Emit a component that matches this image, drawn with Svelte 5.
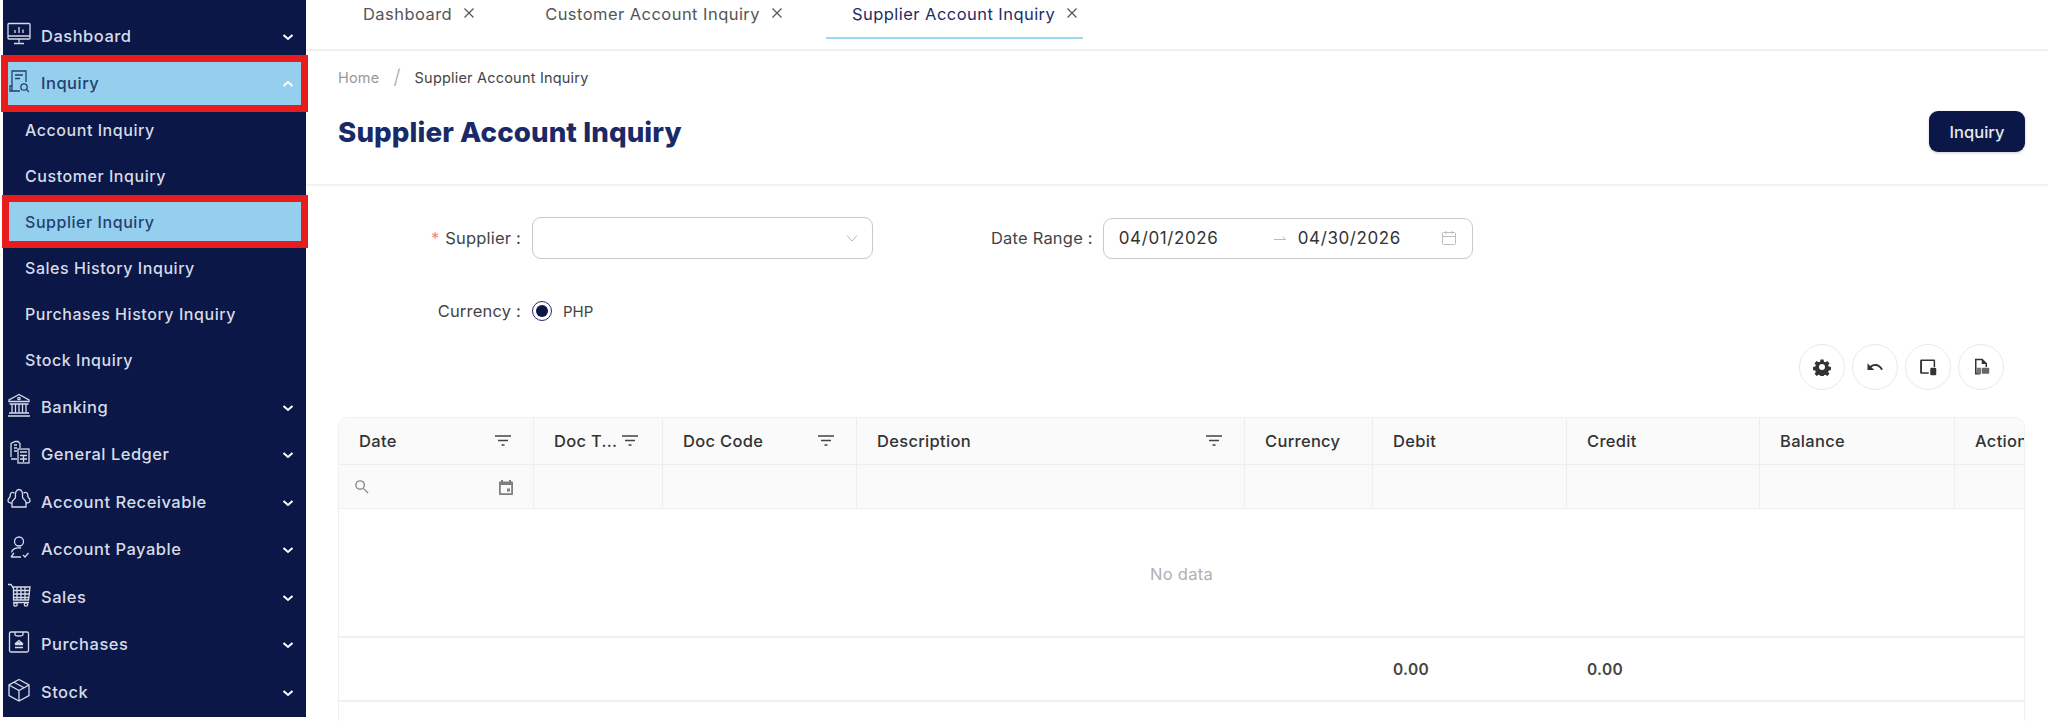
<script>
	// sidebar icons, 24x24 outlines
	const icons = {
		dashboard: '<rect x="1" y="1.5" width="22" height="15.5" rx="1"/><path d="M1 14h22M12 17v3.5M7 21.5h10M8 11V8M12 11V5M16 11V7.5"/>',
		inquiry: '<path d="M5 17V2h14v11M5 17v5h8M5 22h-2V17h2"/><path d="M8 6h8M8 9.5h5"/><circle cx="17" cy="18" r="3.2"/><path d="M19.5 20.5L22 23"/>',
		banking: '<path d="M12 1.5L2 7v1.5h20V7zM2.5 11h19M2 20h20M1 23h22M5 11v9M8.5 11v9M12 11v9M15.5 11v9M19 11v9"/><circle cx="12" cy="5.5" r="1.2"/>',
		ledger: '<path d="M4 17V3.5L8 1.5h3l2 2V8M4 19h6M7 5h3M7 8h3M7 11h3"/><rect x="11" y="9" width="11" height="14"/><path d="M13 12h7M13 15.5h7M13 19h7M16.5 15v7"/>',
		receivable: '<path d="M8.5 9C8 5 9 1.5 12 1.5S16 5 15.5 9c-.3 2 3.5 2.5 3.5 5.5V19H5v-4.500C5 11.500 8.800 11 8.500 9z"/><path d="M7.500 5C5 3.500 2.800 5 3.200 8c.2 1.500-2.200 2-2.200 4.500 0 2 1.500 2.500 4 2.500M16.500 5C19 3.500 21.200 5 20.800 8c-.2 1.500 2.200 2 2.200 4.500 0 2-1.500 2.500-4 2.500"/>',
		payable: '<circle cx="12" cy="6.500" r="4.500"/><path d="M14 13c-5-.8-9 .8-9.500 4.500M4 22h10M4 22l3-4M16 20l2 2 3.500-4"/>',
		sales: '<path d="M1 1.500h3l2.500 4V17h15l1.500-13H5"/><path d="M6.500 7.500h16M6.500 11h16M6.500 14.500h15.500M10 4v13M14 4v13M18 4v13M6 19.500h16"/><circle cx="8.500" cy="21.500" r="1.700"/><circle cx="19" cy="21.500" r="1.700"/>',
		purchases: '<rect x="2.500" y="2" width="19" height="20" rx="1.500"/><path d="M8 2v2.500c0 1 1 1.500 4 1.500s4-.5 4-1.500V2M8 17.500h8M8 14.500h8M12 10.500l-3 2.500h6z"/>',
		stock: '<path d="M12 1.500l10 5.500v10.500L12 23 2 17.500V7zM2 7l10 5.500L22 7M12 12.500V23M7 4.300l10 5.500"/>'
	};

	const menu = [
		{ type: 'parent', label: 'Dashboard', icon: 'dashboard' },
		{ type: 'parent', label: 'Inquiry', icon: 'inquiry', open: true, hl: 'hl-a' },
		{ type: 'sub', label: 'Account Inquiry' },
		{ type: 'sub', label: 'Customer Inquiry' },
		{ type: 'sub', label: 'Supplier Inquiry', hl: 'hl-b' },
		{ type: 'sub', label: 'Sales History Inquiry' },
		{ type: 'sub', label: 'Purchases History Inquiry' },
		{ type: 'sub', label: 'Stock Inquiry' },
		{ type: 'parent', label: 'Banking', icon: 'banking' },
		{ type: 'parent', label: 'General Ledger', icon: 'ledger' },
		{ type: 'parent', label: 'Account Receivable', icon: 'receivable' },
		{ type: 'parent', label: 'Account Payable', icon: 'payable' },
		{ type: 'parent', label: 'Sales', icon: 'sales' },
		{ type: 'parent', label: 'Purchases', icon: 'purchases' },
		{ type: 'parent', label: 'Stock', icon: 'stock' }
	];

	const tabs = [
		{ label: 'Dashboard' },
		{ label: 'Customer Account Inquiry' },
		{ label: 'Supplier Account Inquiry', active: true }
	];

	const columns = [
		{ label: 'Date', filter: true },
		{ label: 'Doc T...', filter: true },
		{ label: 'Doc Code', filter: true },
		{ label: 'Description', filter: true },
		{ label: 'Currency' },
		{ label: 'Debit' },
		{ label: 'Credit' },
		{ label: 'Balance' },
		{ label: 'Action' }
	];
</script>

<div class="page">
	<aside class="sidebar">
		{#each menu as item (item.label)}
			<div class="item {item.type} {item.hl ?? ''}">
				{#if item.icon}
					<svg class="ico" viewBox="0 0 24 24">{@html icons[item.icon]}</svg>
				{/if}
				<span class="item-label">{item.label}</span>
				{#if item.type === 'parent'}
					<svg class="chev" viewBox="0 0 12 8">
						<path d={item.open ? 'M1.500 6L6 2l4.500 4' : 'M1.500 2L6 6l4.500-4'} />
					</svg>
				{/if}
			</div>
		{/each}
	</aside>

	<main class="main">
		<nav class="tabs">
			{#each tabs as tab (tab.label)}
				<div class="tab" class:active={tab.active}>
					<span>{tab.label}</span>
					<svg class="close" viewBox="0 0 12 12"><path d="M1.500 1.500l9 9M10.500 1.500l-9 9" /></svg>
				</div>
			{/each}
		</nav>

		<header class="head">
			<div class="crumbs">
				<span class="crumb-home">Home</span>
				<span class="crumb-sep">/</span>
				<span>Supplier Account Inquiry</span>
			</div>
			<div class="title-row">
				<h1>Supplier Account Inquiry</h1>
				<button type="button" class="primary">Inquiry</button>
			</div>
		</header>

		<section class="form">
			<div class="form-row">
				<div class="field">
					<label class="lbl"><span class="req">*</span> Supplier :</label>
					<div class="select">
						<svg viewBox="0 0 12 8"><path d="M1 1.500L6 7l5-5.500" /></svg>
					</div>
				</div>
				<div class="field field-date">
					<label class="lbl lbl-date">Date Range :</label>
					<div class="range">
						<span class="date date-from">04/01/2026</span>
						<svg class="arrow" viewBox="0 0 14 8"><path d="M1 5.500h11.500L9.500 2.500" /></svg>
						<span class="date">04/30/2026</span>
						<svg class="cal" viewBox="0 0 16 16">
							<rect x="1.500" y="2.500" width="13" height="12" rx="1" />
							<path d="M1.500 6.500h13M5 1v3M11 1v3" />
						</svg>
					</div>
				</div>
			</div>
			<div class="form-row row-currency">
				<div class="field">
					<label class="lbl">Currency :</label>
					<span class="radio"><span></span></span>
					<span class="radio-text">PHP</span>
				</div>
			</div>
		</section>

		<div class="toolbar">
			<button type="button" class="round" aria-label="settings">
				<svg viewBox="0 0 24 24" class="solid">
					<path fill-rule="evenodd" d="M10 2h4l.6 3 1.900.8 2.600-1.700 2.800 2.800-1.700 2.600.8 1.900 3 .6v4l-3 .6-.8 1.900 1.700 2.600-2.800 2.800-2.600-1.700-1.900.8-.6 3h-4l-.6-3-1.900-.8-2.600 1.700-2.800-2.800 1.700-2.600-.8-1.900-3-.6v-4l3-.6.8-1.900L2.100 6.900l2.800-2.800 2.600 1.700 1.900-.8zM12 8a4 4 0 1 0 0 8 4 4 0 0 0 0-8z" />
				</svg>
			</button>
			<button type="button" class="round" aria-label="undo">
				<svg viewBox="0 0 24 24" class="solid">
					<path d="M12.500 8c-2.700 0-5.100 1-7 2.600L2 7v9h9l-3.600-3.600c1.400-1.200 3.200-1.900 5.100-1.900 3.500 0 6.500 2.300 7.600 5.500l2.400-.8C21 11.500 17.100 8 12.500 8z" />
				</svg>
			</button>
			<button type="button" class="round" aria-label="columns">
				<svg viewBox="0 0 24 24" class="solid">
					<path d="M3 2h17a1.500 1.500 0 0 1 1.500 1.500V12h-2V4H4v15h9v2H3a1.500 1.500 0 0 1-1.500-1.500v-16A1.500 1.500 0 0 1 3 2z" />
					<rect x="15" y="13" width="8" height="10" rx="1.500" />
				</svg>
			</button>
			<button type="button" class="round" aria-label="export">
				<svg viewBox="0 0 24 24" class="solid">
					<path d="M4 1h10l6 6v5h-2V8h-5V3H6v16h5v3H4z" />
					<rect x="6" y="13" width="6" height="8" fill="#777" />
					<rect x="13" y="13" width="10" height="8" rx="1" fill="#666" />
				</svg>
			</button>
		</div>

		<div class="table">
			<div class="tr th">
				{#each columns as col (col.label)}
					<div class="cell">
						<span>{col.label}</span>
						{#if col.filter}
							<svg class="filter" viewBox="0 0 16 12"><path d="M0 1h16M3 5.500h10M6.500 10h3" /></svg>
						{/if}
					</div>
				{/each}
			</div>
			<div class="tr filters">
				{#each columns as col, i (col.label)}
					<div class="cell">
						{#if i === 0}
							<svg class="search" viewBox="0 0 16 16"><circle cx="6.500" cy="6.500" r="4.500" /><path d="M10 10l5 5" /></svg>
							<svg class="event" viewBox="0 0 16 16">
								<path fill-rule="evenodd" d="M3 1h2v1.500h6V1h2v1.500h1a1 1 0 0 1 1 1V15a1 1 0 0 1-1 1H2a1 1 0 0 1-1-1V3.500a1 1 0 0 1 1-1h1zM2.800 6v8.200h10.400V6zM9 9.500h3v3H9z" />
							</svg>
						{/if}
					</div>
				{/each}
			</div>
			<div class="empty">No data</div>
			<div class="tr totals">
				{#each columns as col (col.label)}
					<div class="cell">
						{#if col.label === 'Debit' || col.label === 'Credit'}0.00{/if}
					</div>
				{/each}
			</div>
		</div>
	</main>
</div>

<style>
	:global(body) {
		margin: 0;
		background: #fff;
		overflow: hidden;
	}
	.page {
		display: flex;
		height: 721px;
		overflow: hidden;
		font-family: 'Inter', 'Open Sans', sans-serif;
		color: #333;
		background: #fff;
	}

	/* sidebar */
	.sidebar {
		width: 303px;
		height: 717px;
		margin-left: 3px;
		padding-top: 13px;
		box-sizing: border-box;
		flex-shrink: 0;
		background: #0a1747;
		display: flex;
		flex-direction: column;
	}
	.item {
		position: relative;
		display: flex;
		align-items: center;
		flex-shrink: 0;
		color: #d8dbe6;
		font-weight: 500;
	}
	.item-label {
		margin-top: -2px;
	}
	.parent {
		height: 47.500px;
		font-size: 16.500px;
		letter-spacing: 0.5px;
	}
	.sub {
		height: 46px;
		padding-left: 22px;
		font-size: 16px;
		letter-spacing: 0.55px;
	}
	.ico {
		width: 24px;
		height: 24px;
		margin-left: 4px;
		margin-top: -6px;
		margin-right: 10px;
		fill: none;
		stroke: currentColor;
		stroke-width: 1.300;
		flex-shrink: 0;
	}
	.chev {
		width: 12px;
		height: 8px;
		margin-left: auto;
		margin-right: 12px;
		fill: none;
		stroke: #fff;
		stroke-width: 2;
	}
	.hl-a,
	.hl-b {
		background: #94cfee;
		color: #24406f;
	}
	.hl-a::after,
	.hl-b::after {
		content: '';
		position: absolute;
		border: 7px solid #e81c1c;
		pointer-events: none;
	}
	.hl-a::after {
		inset: -6px -2px -4px -2px;
	}
	.hl-b::after {
		inset: -5px -2px -2px -1px;
	}
	.hl-a .ico {
		color: #24406f;
	}

	/* main column */
	.main {
		flex: 1;
		min-width: 0;
		display: flex;
		flex-direction: column;
	}
	.tabs {
		height: 49px;
		flex-shrink: 0;
		display: flex;
		align-items: flex-start;
		padding-left: 57px;
		border-bottom: 2px solid #f0f0f0;
	}
	.tab {
		display: flex;
		align-items: center;
		gap: 11px;
		height: 28px;
		color: #555;
		font-size: 16.500px;
		letter-spacing: 0.45px;
	}
	.tab + .tab {
		margin-left: 70px;
	}
	.tab.active {
		color: #1f2c66;
		margin-left: 43px;
		padding: 0 5px 9px 26px;
		height: 28px;
		border-bottom: 2px solid #9fd6f2;
	}
	.close {
		width: 12px;
		height: 12px;
		margin-top: -3px;
		fill: none;
		stroke: #555;
		stroke-width: 1.200;
	}
	.head {
		height: 135px;
		flex-shrink: 0;
		box-sizing: border-box;
		padding: 12px 23px 0 32px;
		border-bottom: 2px solid #f2f2f2;
	}
	.crumbs {
		display: flex;
		align-items: center;
		gap: 14px;
		height: 28px;
		font-size: 14.500px;
		letter-spacing: 0.2px;
		color: #444;
	}
	.crumb-home {
		color: #999;
	}
	.crumb-sep {
		color: #aaa;
		font-size: 20px;
		font-weight: 300;
	}
	.title-row {
		display: flex;
		align-items: center;
		justify-content: space-between;
		margin-top: 20px;
	}
	h1 {
		margin: 0;
		font-size: 27.700px;
		font-weight: 800;
		color: #1a2a66;
		letter-spacing: 0.1px;
	}
	.primary {
		width: 96px;
		height: 41px;
		border: 0;
		border-radius: 9px;
		background: #0a1747;
		color: #e6e8ef;
		font: 500 16.500px 'Inter', sans-serif;
		box-shadow: 0 1px 3px rgba(0, 0, 0, 0.2);
	}

	/* form */
	.form {
		height: 158px;
		flex-shrink: 0;
		box-sizing: border-box;
		padding-top: 31px;
		font-size: 16.500px;
		color: #444;
	}
	.form-row,
	.field {
		display: flex;
		align-items: center;
	}
	.lbl {
		width: 226px;
		text-align: right;
		padding-right: 11px;
		box-sizing: border-box;
		letter-spacing: 0.2px;
	}
	.req {
		color: #f08a8a;
		margin-right: 1px;
	}
	.select {
		width: 341px;
		height: 42px;
		box-sizing: border-box;
		border: 1px solid #c9c9c9;
		border-radius: 9px;
		display: flex;
		align-items: center;
		justify-content: flex-end;
		padding-right: 14px;
	}
	.select svg {
		width: 12px;
		height: 8px;
		fill: none;
		stroke: #b5b5b5;
		stroke-width: 1;
	}
	.field-date {
		margin-left: 118px;
	}
	.lbl-date {
		width: auto;
		padding-right: 10px;
	}
	.range {
		width: 370px;
		height: 41px;
		box-sizing: border-box;
		border: 1px solid #c9c9c9;
		border-radius: 9px;
		display: flex;
		align-items: center;
		padding: 0 15px;
		color: #333;
	}
	.date {
		font-size: 17px;
		letter-spacing: 0.6px;
	}
	.date-from {
		width: 154px;
		flex-shrink: 0;
	}
	.arrow {
		width: 14px;
		height: 8px;
		margin-right: 11px;
		fill: none;
		stroke: #bbb;
	}
	.cal {
		width: 16px;
		height: 16px;
		margin-left: auto;
		fill: none;
		stroke: #bdbdbd;
	}
	.row-currency {
		margin-top: 42px;
	}
	.radio {
		width: 20px;
		height: 20px;
		box-sizing: border-box;
		border: 1px solid #1f2c66;
		border-radius: 50%;
		display: flex;
		align-items: center;
		justify-content: center;
	}
	.radio span {
		width: 12px;
		height: 12px;
		border-radius: 50%;
		background: #0a1747;
	}
	.radio-text {
		margin-left: 11px;
		font-size: 15px;
	}

	/* toolbar */
	.toolbar {
		height: 73px;
		flex-shrink: 0;
		display: flex;
		justify-content: flex-end;
		gap: 7px;
		padding-right: 44px;
	}
	.round {
		width: 46px;
		height: 46px;
		padding: 0;
		border: 1px solid #e8e8e8;
		border-radius: 50%;
		background: #fff;
		display: flex;
		align-items: center;
		justify-content: center;
	}
	.solid {
		width: 18px;
		height: 18px;
		fill: #333;
	}

	/* table */
	.table {
		margin: 0 23px 0 32px;
		flex-shrink: 0;
		height: 310px;
		overflow: hidden;
		border-radius: 10px 10px 0 0;
		border: solid #f0f0f0;
		border-width: 1px 1px 0 1px;
		font-size: 16.500px;
		letter-spacing: 0.3px;
	}
	.tr {
		display: grid;
		grid-template-columns: 195px 129px 194px 388px 128px 194px 193px 195px 195px;
	}
	.th,
	.filters {
		background: #fafafa;
	}
	.th {
		height: 46px;
		border-bottom: 1px solid #eee;
		color: #333;
		font-weight: 500;
	}
	.filters {
		height: 43px;
		border-bottom: 1px solid #eee;
	}
	.cell {
		position: relative;
		display: flex;
		align-items: center;
		justify-content: space-between;
		box-sizing: border-box;
		padding: 0 20px;
		border-right: 1px solid #eee;
		white-space: nowrap;
	}
	.totals .cell {
		border-right: 0;
		font-weight: 600;
		font-size: 15.500px;
		color: #444;
	}
	.filter {
		width: 16px;
		height: 12px;
		margin-right: 2px;
		fill: none;
		stroke: #444;
		stroke-width: 1.500;
		flex-shrink: 0;
	}
	.th .cell:nth-child(2) {
		padding-right: 17px;
	}
	.th .cell:nth-child(2) .filter {
		margin-right: 7px;
	}
	.search {
		width: 15px;
		height: 15px;
		margin-left: -5px;
		fill: none;
		stroke: #8c8c8c;
		stroke-width: 1.500;
	}
	.event {
		width: 16px;
		height: 16px;
		margin-right: -1px;
		fill: #7f7f7f;
	}
	.empty {
		height: 129px;
		display: flex;
		align-items: center;
		justify-content: center;
		box-sizing: border-box;
		border-bottom: 2px solid #f0f0f0;
		color: #b0b0b0;
		font-size: 16.500px;
		padding-top: 2px;
	}
	.totals {
		height: 62px;
		border-bottom: 2px solid #f0f0f0;
	}
</style>
